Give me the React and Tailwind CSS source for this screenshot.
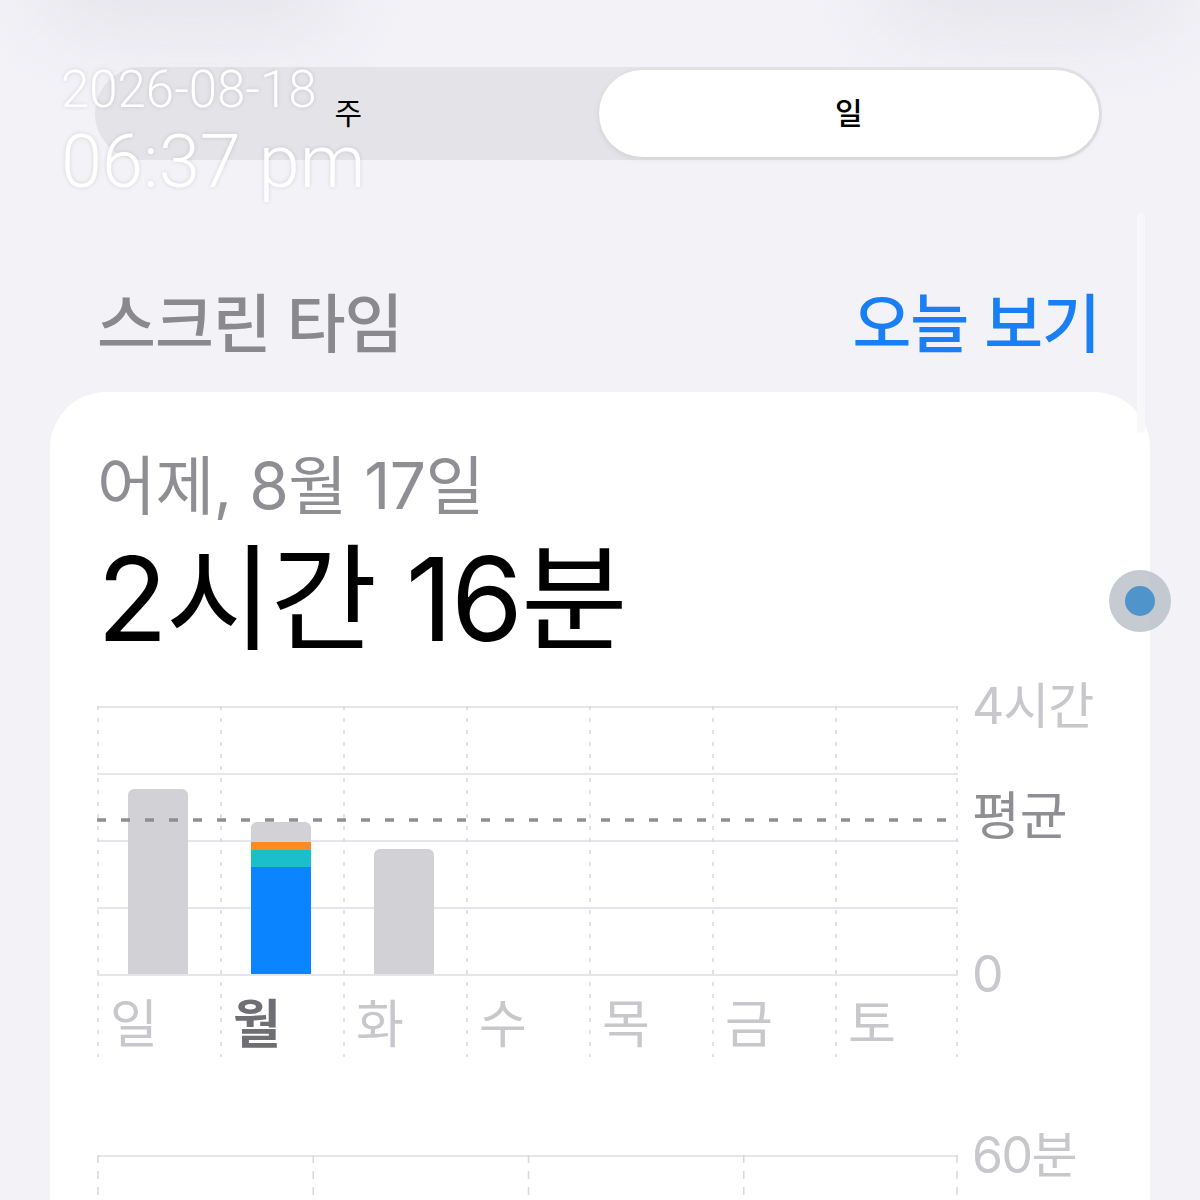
import React from "react";

const days = ["일", "월", "화", "수", "목", "금", "토"];

// bar heights in px from the 0 line (chart is 268px tall = 4시간)
const bars = [
  { day: "일", segments: [{ h: 185, color: "#d1d1d6" }] },
  {
    day: "월",
    segments: [
      { h: 107, color: "#0a84ff" },
      { h: 17, color: "#1bbfc9" },
      { h: 8, color: "#ff8a1f" },
      { h: 20, color: "#d1d1d6" },
    ],
  },
  { day: "화", segments: [{ h: 125, color: "#d1d1d6" }] },
];

function WeekChart() {
  const W = 861;
  const colW = W / 7;
  const base = 268;
  return (
    <div className="flex">
      <div className="relative w-[861px] h-[351px]">
        <svg width="861" height="351" className="absolute inset-0">
          {[0, 1, 2, 3, 4].map((i) => (
            <line
              key={"h" + i}
              x1="0"
              x2={W}
              y1={i * 67 + 1}
              y2={i * 67 + 1}
              stroke="#e5e5ea"
              strokeWidth="2"
            />
          ))}
          {[0, 1, 2, 3, 4, 5, 6, 7].map((i) => (
            <line
              key={"v" + i}
              x1={Math.min(i * colW + 1, W - 1)}
              x2={Math.min(i * colW + 1, W - 1)}
              y1="0"
              y2="351"
              stroke="#d8d8dc"
              strokeWidth="1.5"
              strokeDasharray="4 8"
            />
          ))}
          {bars.map((b, i) => {
            let y = base;
            const x = i * colW + 31;
            const total = b.segments.reduce((s, seg) => s + seg.h, 0);
            return (
              <g key={b.day}>
                <clipPath id={"clip" + i}>
                  <rect x={x} y={base - total} width="60" height={total + 6} rx="6" />
                </clipPath>
                <g clipPath={`url(#clip${i})`}>
                  {b.segments.map((seg, j) => {
                    y -= seg.h;
                    return (
                      <rect key={j} x={x} y={y} width="60" height={seg.h} fill={seg.color} />
                    );
                  })}
                </g>
              </g>
            );
          })}
          <line
            x1="0"
            x2={W}
            y1="114"
            y2="114"
            stroke="#8e8e93"
            strokeWidth="3.5"
            strokeDasharray="9 15"
          />
        </svg>
        <div className="absolute left-0 right-0 top-[293px] flex">
          {days.map((d) => (
            <div
              key={d}
              className={`w-[123px] pl-[13px] text-[52px] leading-none ${
                d === "월" ? "text-[#6e6e73] font-semibold" : "text-[#c7c7cc]"
              }`}
            >
              {d}
            </div>
          ))}
        </div>
      </div>
      <div className="relative flex-1">
        <span className="absolute left-[14px] top-[-25px] text-[50px] leading-none text-[#c7c7cc] tracking-[-1px]">
          4시간
        </span>
        <span className="absolute left-[14px] top-[85px] text-[52px] leading-none text-[#8e8e93]">
          평균
        </span>
        <span className="absolute left-[14px] top-[243px] text-[50px] leading-none text-[#c7c7cc]">
          0
        </span>
      </div>
    </div>
  );
}

function HourChart() {
  return (
    <div className="flex mt-[98px]">
      <div className="relative w-[861px] h-[60px]">
        <svg width="861" height="60" className="absolute inset-0">
          <line x1="0" x2="861" y1="1" y2="1" stroke="#e5e5ea" strokeWidth="2" />
          {[0, 1, 2, 3, 4].map((i) => (
            <line
              key={i}
              x1={Math.min(i * 215.25 + 1, 860)}
              x2={Math.min(i * 215.25 + 1, 860)}
              y1="0"
              y2="60"
              stroke="#d8d8dc"
              strokeWidth="1.5"
              strokeDasharray="8 8"
            />
          ))}
        </svg>
      </div>
      <div className="relative flex-1">
        <span className="absolute left-[14px] top-[-25px] text-[50px] leading-none text-[#c7c7cc] tracking-[-1.5px]">
          60분
        </span>
      </div>
    </div>
  );
}

export default function App() {
  return (
    <div
      className="relative w-[1200px] h-[1200px] overflow-hidden bg-[#f2f2f7]"
      style={{ fontFamily: '"Inter", "Noto Sans CJK KR", sans-serif' }}
    >
      {/* soft blur at the top edge */}
      <div className="absolute left-[40px] top-[-70px] w-[300px] h-[100px] rounded-full bg-[#e4e4e9] blur-2xl" />
      <div className="absolute left-[880px] top-[-70px] w-[300px] h-[100px] rounded-full bg-[#e4e4e9] blur-2xl" />

      <div className="relative pt-[67px] pl-[95px] pr-[98px]">
        <div className="flex h-[93px] rounded-full bg-[#e3e3e8] p-[3px]">
          <div className="flex-1 flex items-center justify-center text-[30px] text-black">주</div>
          <div className="flex-1 flex items-center justify-center rounded-full bg-white text-[30px] font-medium text-black shadow-[0_2px_6px_rgba(0,0,0,0.08)]">
            일
          </div>
        </div>
      </div>

      <div className="relative flex items-center justify-between pl-[97px] pr-[100px] mt-[126px] h-[76px]">
        <span className="text-[64px] font-medium text-[#8a8a8e] tracking-[-1px]">스크린 타임</span>
        <span className="text-[64px] font-medium text-[#1a7ff5] tracking-[-1px]">오늘 보기</span>
      </div>

      <div className="relative ml-[50px] w-[1100px] mt-[30px] h-[900px] rounded-t-[56px] bg-white pl-[47px] pt-[62px]">
        <div className="text-[64px] leading-none text-[#8e8e93] tracking-[-0.5px]">어제, 8월 17일</div>
        <div className="mt-[23px] text-[116px] leading-none text-black tracking-[-2px]">2시간 16분</div>
        <div className="mt-[49px]">
          <WeekChart />
          <HourChart />
        </div>
      </div>

      {/* scroll indicator */}
      <div className="absolute left-[1137px] top-[213px] w-[8px] h-[220px] rounded-full bg-[#f8f8fb]" />

      {/* touch dot */}
      <div className="absolute left-[1109px] top-[570px] w-[62px] h-[62px] rounded-full bg-[#b7bec6]/80 flex items-center justify-center">
        <div className="w-[30px] h-[30px] rounded-full bg-[#4f95cb]" />
      </div>

      {/* timestamp overlay */}
      <div
        className="absolute left-[61px] top-[64px] text-white leading-none font-light drop-shadow-[0_0_2px_rgba(0,0,0,0.12)]"
        style={{ fontFamily: "Roboto, sans-serif" }}
      >
        <div className="text-[51px]">2026-08-18</div>
        <div className="mt-[10px] text-[74px]">06:37 pm</div>
      </div>
    </div>
  );
}
